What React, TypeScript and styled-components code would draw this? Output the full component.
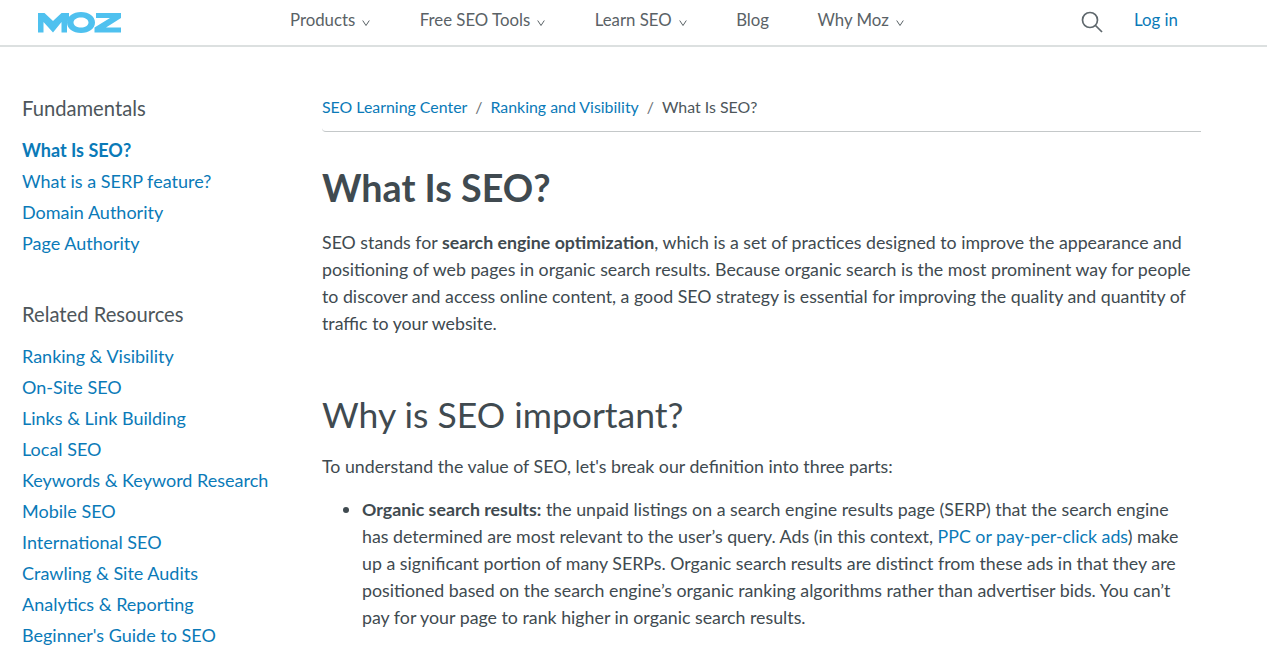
import styled, { createGlobalStyle } from "styled-components";

const GlobalStyle = createGlobalStyle`
  html, body {
    margin: 0;
    padding: 0;
    height: 651px;
    overflow: hidden;
    background: #fff;
    font-family: Lato, "Liberation Sans", sans-serif;
    color: #404a50;
  }
  a {
    color: #0a7ab8;
    text-decoration: none;
  }
`;

const Header = styled.header`
  display: flex;
  align-items: center;
  height: 45px;
  border-bottom: 2px solid #dce0e0;
`;

const LogoLink = styled.a`
  display: block;
  width: 84px;
  height: 21px;
  margin: -1px 0 0 38px;
`;

const Nav = styled.nav`
  display: flex;
  align-items: center;
  margin-left: 168px;
  font-size: 16.8px;
  color: #5a6266;
`;

const NavItem = styled.span<{ $caret: boolean }>`
  display: flex;
  align-items: baseline;
  gap: 7px;
  margin: -6px ${(p) => (p.$caret ? "49.500px" : "48.500px")} 0 0;
`;

const Caret = styled.svg`
  width: 8px;
  height: 6px;
  margin-bottom: -2px;
`;

const HeaderRight = styled.div`
  display: flex;
  align-items: center;
  margin-left: auto;
  margin-right: 89px;
  gap: 31px;
`;

const LoginLink = styled.a`
  font-size: 16.8px;
  margin-top: -6px;
`;

const SearchIcon = styled.svg`
  width: 22px;
  height: 22px;
  margin-top: -1px;
`;

const Page = styled.div`
  display: flex;
  align-items: flex-start;
`;

const Sidebar = styled.aside`
  width: 322px;
  padding: 49px 0 0 22px;
  box-sizing: border-box;
`;

const SideTitle = styled.h4`
  margin: 0 0 15px;
  font-size: 20.2px;
  line-height: 24px;
  font-weight: 400;
  color: #4d565b;
`;

const SideList = styled.ul<{ $spaced?: boolean }>`
  list-style: none;
  margin: 0 0 ${(p) => (p.$spaced ? "43px" : "0")};
  padding: 0;
  font-size: 18px;
  line-height: 31px;
`;

const SideLink = styled.a<{ $active?: boolean }>`
  font-weight: ${(p) => (p.$active ? 700 : 400)};
`;

const Main = styled.main`
  width: 879px;
  padding-top: 48px;
`;

const Crumbs = styled.div`
  display: flex;
  gap: 8px;
  height: 36px;
  border-bottom: 1px solid #c4c8c9;
  border-bottom-left-radius: 4px;
  font-size: 15.9px;
  line-height: 24px;
  color: #4d565b;
`;

const Slash = styled.span`
  color: #6a7276;
`;

const Title = styled.h1`
  margin: 31px 0 16px;
  font-size: 37.7px;
  line-height: 50px;
  font-weight: 700;
  color: #404a50;
`;

const Paragraph = styled.p`
  margin: 0;
  font-size: 17.75px;
  line-height: 27px;
  color: #404a50;
`;

const SectionTitle = styled.h2`
  margin: 55px 0 15px;
  font-size: 35.5px;
  line-height: 46px;
  font-weight: 400;
  color: #404a50;
`;

const List = styled.ul`
  margin: 16px 0 0;
  padding: 0 12px 0 40px;
  font-size: 17.8px;
  line-height: 27px;
`;

const fundamentals = ["What is a SERP feature?", "Domain Authority", "Page Authority"];
const resources = [
  "Ranking & Visibility",
  "On-Site SEO",
  "Links & Link Building",
  "Local SEO",
  "Keywords & Keyword Research",
  "Mobile SEO",
  "International SEO",
  "Crawling & Site Audits",
  "Analytics & Reporting",
  "Beginner's Guide to SEO",
];
const navItems = [
  { label: "Products", caret: true },
  { label: "Free SEO Tools", caret: true },
  { label: "Learn SEO", caret: true },
  { label: "Blog", caret: false },
  { label: "Why Moz", caret: true },
];

export default function App() {
  return (
    <>
      <GlobalStyle />
      <Header>
        <LogoLink href="#">
          <svg viewBox="0 0 84 21" width="84" height="21" fill="#4fc1ef">
            <path d="M0 20.500V1h6.500l8.500 8 8.500-8H31v5l-2 4.500v10h-5.500V10L15 20.500 5.500 10v10.500z" />
            <path fillRule="evenodd" d="M43 0c8 0 14 4.500 14 10.500S51 21 43 21s-14-4.500-14-10.500S35 0 43 0zm0 5.500c-4 0-7.500 2-7.500 5s3.500 5 7.500 5 7.500-2 7.500-5-3.500-5-7.500-5z" />
            <path d="M58 1h25v5L68 15.500h15v5H56.500v-5L72 6H58z" />
          </svg>
        </LogoLink>
        <Nav>
          {navItems.map((item) => (
            <NavItem key={item.label} $caret={item.caret}>
              {item.label}
              {item.caret && (
                <Caret viewBox="0 0 8 6" fill="none" stroke="#5a6266" strokeWidth="1">
                  <path d="M.7.500 4 5.500 7.300.500" />
                </Caret>
              )}
            </NavItem>
          ))}
        </Nav>
        <HeaderRight>
          <SearchIcon viewBox="0 0 22 22" fill="none" stroke="#5f686d" strokeWidth="1.7">
            <circle cx="9" cy="9" r="7.500" />
            <path d="m14.500 14.500 6.500 6.500" />
          </SearchIcon>
          <LoginLink href="#">Log in</LoginLink>
        </HeaderRight>
      </Header>
      <Page>
        <Sidebar>
          <SideTitle>Fundamentals</SideTitle>
          <SideList $spaced>
            <li>
              <SideLink href="#" $active>
                What Is SEO?
              </SideLink>
            </li>
            {fundamentals.map((name) => (
              <li key={name}>
                <SideLink href="#">{name}</SideLink>
              </li>
            ))}
          </SideList>
          <SideTitle>Related Resources</SideTitle>
          <SideList>
            {resources.map((name) => (
              <li key={name}>
                <SideLink href="#">{name}</SideLink>
              </li>
            ))}
          </SideList>
        </Sidebar>
        <Main>
          <Crumbs>
            <a href="#">SEO Learning Center</a>
            <Slash>/</Slash>
            <a href="#">Ranking and Visibility</a>
            <Slash>/</Slash>
            <span>What Is SEO?</span>
          </Crumbs>
          <Title>What Is SEO?</Title>
          <Paragraph>
            SEO stands for <b>search engine optimization</b>, which is a set of practices designed to improve the appearance and positioning of web pages in organic search results. Because organic search is the most prominent way for people to discover and access online content, a good SEO strategy is essential for improving the quality and quantity of traffic to your website.
          </Paragraph>
          <SectionTitle>Why is SEO important?</SectionTitle>
          <Paragraph>To understand the value of SEO, let's break our definition into three parts:</Paragraph>
          <List>
            <li>
              <b>Organic search results:</b> the unpaid listings on a search engine results page (SERP) that the search engine has determined are most relevant to the user’s query. Ads (in this context, <a href="#">PPC or pay-per-click ads</a>) make up a significant portion of many SERPs. Organic search results are distinct from these ads in that they are positioned based on the search engine’s organic ranking algorithms rather than advertiser bids. You can’t pay for your page to rank higher in organic search results.
            </li>
          </List>
        </Main>
      </Page>
    </>
  );
}
